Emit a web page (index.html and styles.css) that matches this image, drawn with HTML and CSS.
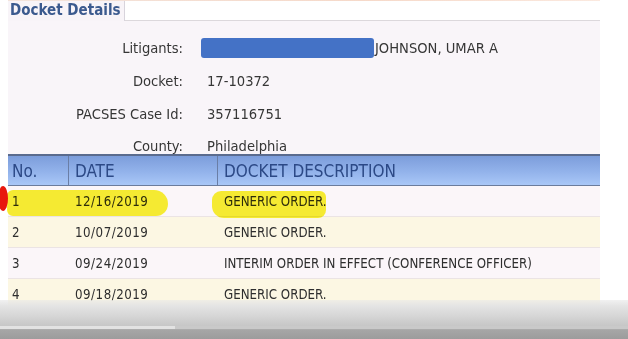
FILE: index.html
```html
<!DOCTYPE html>
<html>
<head>
<meta charset="utf-8">
<link rel="stylesheet" href="styles.css">
</head>
<body>
<div class="topstrip"></div>
<div class="page">
  <div class="tabs">
    <div class="tab">Docket Details</div>
    <div class="tab-rest"></div>
  </div>
  <div class="details">
    <div class="field"><span class="label">Litigants:</span><span class="value"><span class="redact"></span>JOHNSON, UMAR A</span></div>
    <div class="field"><span class="label">Docket:</span><span class="value">17-10372</span></div>
    <div class="field"><span class="label">PACSES Case Id:</span><span class="value">357116751</span></div>
    <div class="field last"><span class="label">County:</span><span class="value">Philadelphia</span></div>
  </div>
  <div class="table">
    <div class="thead">
      <div class="c-no">No.</div>
      <div class="c-date">DATE</div>
      <div class="c-desc">DOCKET DESCRIPTION</div>
    </div>
    <div class="row odd">
      <div class="c-no">1</div>
      <div class="c-date">12/16/2019</div>
      <div class="c-desc">GENERIC ORDER.</div>
    </div>
    <div class="row even">
      <div class="c-no">2</div>
      <div class="c-date">10/07/2019</div>
      <div class="c-desc">GENERIC ORDER.</div>
    </div>
    <div class="row odd">
      <div class="c-no">3</div>
      <div class="c-date">09/24/2019</div>
      <div class="c-desc">INTERIM ORDER IN EFFECT (CONFERENCE OFFICER)</div>
    </div>
    <div class="row even">
      <div class="c-no">4</div>
      <div class="c-date">09/18/2019</div>
      <div class="c-desc">GENERIC ORDER.</div>
    </div>
  </div>
</div>
<div class="hl hl-1"></div>
<div class="hl hl-2"></div>
<div class="reddot"></div>
<div class="player">
  <div class="progress"><div class="played"></div></div>
</div>
</body>
</html>
```

FILE: styles.css
```css
html, body {
  margin: 0;
  padding: 0;
  background: #ffffff;
  width: 628px;
  height: 339px;
  overflow: hidden;
  position: relative;
  font-family: "DejaVu Sans Condensed", "DejaVu Sans", sans-serif;
}

.topstrip {
  height: 1px;
  background: linear-gradient(90deg, #f3e4dc, #f6d9c9 60%, #fbe9df);
  margin-left: 8px;
  width: 592px;
}

.page {
  margin-left: 8px;
  width: 592px;
}

.tabs {
  display: flex;
  height: 20px;
}

.tab {
  background: #f8f4f8;
  color: #3b5a8e;
  font-weight: bold;
  font-size: 15px;
  line-height: 19px;
  padding: 0 3px 0 2px;
  border-right: 1px solid #d8d4dc;
}

.tab-rest {
  flex: 1;
  background: #ffffff;
  border-bottom: 1px solid #dcd8dc;
}

.details {
  background: #f9f5f9;
  height: 133px;
  padding-top: 10px;
  box-sizing: border-box;
  font-size: 14.6px;
  line-height: 16px;
  color: #363636;
}

.field {
  display: flex;
  height: 33px;
  align-items: center;
}

.field.last {
  height: 24px;
  align-items: flex-end;
}

.label {
  width: 175px;
  text-align: right;
}

.value {
  margin-left: 24px;
  display: flex;
  align-items: center;
}

.redact {
  display: inline-block;
  width: 173px;
  height: 20px;
  background: #4472c6;
  border-radius: 3px;
  margin-left: -6px;
  margin-right: 1px;
}

.thead {
  display: flex;
  height: 29px;
  border-top: 2px solid #5a6b8e;
  border-bottom: 1px solid #6b7c9c;
  background: linear-gradient(180deg, #7c9ddb 0%, #93b3eb 55%, #a9c7f7 100%);
  color: #2c4986;
  font-size: 17px;
  align-items: center;
}

.thead > div {
  height: 100%;
  display: flex;
  align-items: center;
  box-sizing: border-box;
}

.c-no {
  width: 61px;
  padding-left: 4px;
  box-sizing: border-box;
}

.c-date {
  width: 149px;
  padding-left: 6px;
  box-sizing: border-box;
}

.c-desc {
  flex: 1;
  padding-left: 6px;
}

.thead .c-no,
.thead .c-date {
  border-right: 1px solid #6a7ea6;
}

.row {
  display: flex;
  height: 31px;
  align-items: center;
  font-size: 13.2px;
  color: #2e2e2e;
  border-bottom: 1px solid #ebe4e4;
  box-sizing: border-box;
}

.row .c-no { padding-left: 4px; }
.row .c-date { padding-left: 6px; letter-spacing: 0.5px; }
.row .c-desc { padding-left: 6px; }

.row.odd { background: #fbf6f9; }
.row.even { background: #fcf7e3; }

.hl {
  position: absolute;
  background: rgba(248, 240, 0, 0.8);
  mix-blend-mode: multiply;
}

.hl-1 {
  left: 7px;
  top: 190px;
  width: 161px;
  height: 26px;
  border-radius: 6px 14px 12px 6px;
}

.hl-2 {
  left: 212px;
  top: 191px;
  width: 114px;
  height: 27px;
  border-radius: 9px 6px 8px 12px;
}

.reddot {
  position: absolute;
  left: -2px;
  top: 186px;
  width: 10px;
  height: 25px;
  border-radius: 50%;
  background: #e8180e;
}

.player {
  position: absolute;
  left: 0;
  top: 300px;
  width: 628px;
  height: 39px;
  background: linear-gradient(180deg, rgba(232,232,232,0.6) 0px, #e4e4e4 6px, #d6d6d6 16px, #c6c6c6 26px, #c4c4c4 27px, #a6a6a6 30px, #9c9c9c 39px);
}

.progress {
  position: absolute;
  left: 0;
  top: 26px;
  width: 628px;
  height: 3px;
  background: #c9c9c9;
}

.played {
  width: 175px;
  height: 100%;
  background: #e2e2e2;
}
```
